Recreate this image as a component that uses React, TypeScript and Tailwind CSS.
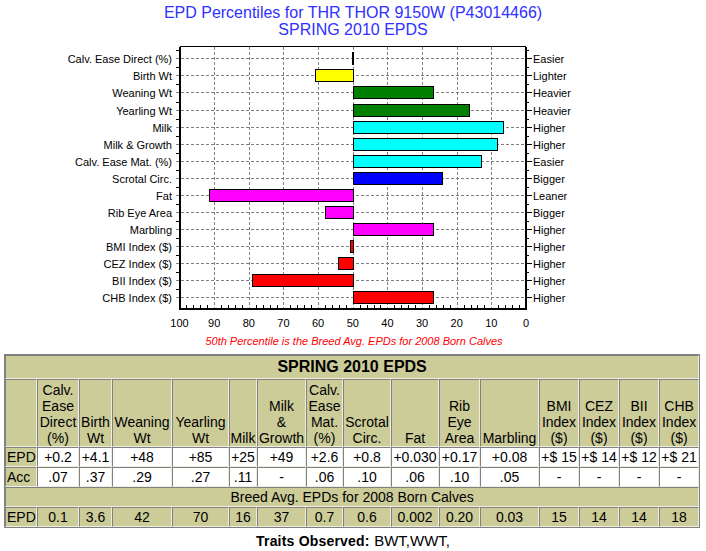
const FONT = '"Liberation Sans", Arial, sans-serif'

interface Trait {
  label: string
  side: string
  from: number
  to: number
  color: string
}

const TRAITS: Trait[] = [
  { label: 'Calv. Ease Direct (%)', side: 'Easier', from: 351.5, to: 352.5, color: '#000000' },
  { label: 'Birth Wt', side: 'Lighter', from: 315, to: 352.5, color: '#ffff00' },
  { label: 'Weaning Wt', side: 'Heavier', from: 352.5, to: 432, color: '#008000' },
  { label: 'Yearling Wt', side: 'Heavier', from: 352.5, to: 468.5, color: '#008000' },
  { label: 'Milk', side: 'Higher', from: 352.5, to: 502, color: '#00ffff' },
  { label: 'Milk & Growth', side: 'Higher', from: 352.5, to: 496.5, color: '#00ffff' },
  { label: 'Calv. Ease Mat. (%)', side: 'Easier', from: 352.5, to: 480.5, color: '#00ffff' },
  { label: 'Scrotal Circ.', side: 'Bigger', from: 352.5, to: 441, color: '#0000ff' },
  { label: 'Fat', side: 'Leaner', from: 209, to: 352.5, color: '#ff00ff' },
  { label: 'Rib Eye Area', side: 'Bigger', from: 325, to: 352.5, color: '#ff00ff' },
  { label: 'Marbling', side: 'Higher', from: 352.5, to: 432, color: '#ff00ff' },
  { label: 'BMI Index ($)', side: 'Higher', from: 350, to: 352.5, color: '#ff0000' },
  { label: 'CEZ Index ($)', side: 'Higher', from: 338, to: 352.5, color: '#ff0000' },
  { label: 'BII Index ($)', side: 'Higher', from: 252, to: 352.5, color: '#ff0000' },
  { label: 'CHB Index ($)', side: 'Higher', from: 352.5, to: 432, color: '#ff0000' },
]

// plot box in page pixels
const LEFT = 179.5
const RIGHT = 526
const TOP = 46.5
const BOTTOM = 308.5
const rowY = (i: number) => Math.round(58.3 + i * 17.07)
const xOf = (v: number) => RIGHT - v * 3.465

function PercentileChart() {
  const ticks = [100, 90, 80, 70, 60, 50, 40, 30, 20, 10, 0]
  const minor: number[] = []
  for (let v = 2; v < 100; v += 2) if (v % 10) minor.push(v)

  return (
    <svg
      width={706}
      height={296}
      viewBox="0 38 706 296"
      className="block"
      shapeRendering="crispEdges"
      fontFamily={FONT}
      fontSize={11}
    >
      {/* vertical grid */}
      {ticks.slice(1, -1).map((v) => (
        <line
          key={v}
          x1={Math.round(xOf(v)) + 0.5}
          x2={Math.round(xOf(v)) + 0.5}
          y1={TOP}
          y2={BOTTOM}
          stroke="#808080"
          strokeDasharray="3 2"
        />
      ))}
      {/* row grid + left ticks */}
      {TRAITS.map((t, i) => (
        <line
          key={t.label}
          x1={176}
          x2={RIGHT}
          y1={rowY(i) + 0.5}
          y2={rowY(i) + 0.5}
          stroke="#808080"
          strokeDasharray="3 2"
        />
      ))}
      {/* bars */}
      {TRAITS.map((t, i) => (
        <rect
          key={t.label}
          x={Math.round(t.from) + 0.5}
          y={rowY(i) - 5.5}
          width={Math.max(1, Math.round(t.to - t.from))}
          height={12}
          fill={t.color}
          stroke="#000"
        />
      ))}
      {/* frame */}
      <line x1={LEFT} x2={RIGHT} y1={TOP} y2={TOP} stroke="#000" />
      <line x1={LEFT} x2={LEFT} y1={TOP} y2={BOTTOM + 1} stroke="#000" strokeWidth={2} />
      <line x1={RIGHT} x2={RIGHT} y1={TOP} y2={BOTTOM + 1} stroke="#000" strokeWidth={2} />
      <line x1={LEFT - 1} x2={RIGHT + 1} y1={BOTTOM} y2={BOTTOM} stroke="#000" strokeWidth={2} />
      {/* axis ticks */}
      {minor.map((v) => (
        <line
          key={v}
          x1={Math.round(xOf(v)) + 0.5}
          x2={Math.round(xOf(v)) + 0.5}
          y1={BOTTOM - 4}
          y2={BOTTOM}
          stroke="#000"
        />
      ))}
      {TRAITS.map((t, i) => (
        <g key={t.label}>
          <line x1={RIGHT} x2={532} y1={rowY(i) + 0.5} y2={rowY(i) + 0.5} stroke="#000" />
          <line x1={RIGHT} x2={529} y1={rowY(i) - 8 + 0.5} y2={rowY(i) - 8 + 0.5} stroke="#000" />
          <line x1={176} x2={LEFT} y1={rowY(i) - 8 + 0.5} y2={rowY(i) - 8 + 0.5} stroke="#000" />
        </g>
      ))}
      {/* labels */}
      {TRAITS.map((t, i) => (
        <g key={t.label}>
          <text x={172} y={rowY(i) + 4.5} textAnchor="end" fill="#000">
            {t.label}
          </text>
          <text x={533} y={rowY(i) + 4.5} fill="#000">
            {t.side}
          </text>
        </g>
      ))}
      {ticks.map((v) => (
        <text key={v} x={xOf(v)} y={327} textAnchor="middle" fill="#000">
          {v}
        </text>
      ))}
    </svg>
  )
}

const COLS = [
  'w-[32px]', 'w-[42px]', 'w-[33px]', 'w-[60px]', 'w-[57px]', 'w-[28px]', 'w-[49px]', 'w-[37px]',
  'w-[48px]', 'w-[48px]', 'w-[41px]', 'w-[59px]', 'w-[40px]', 'w-[40px]', 'w-[40px]', 'w-[40px]',
]

const HEADERS: string[][] = [
  [],
  ['Calv.', 'Ease', 'Direct', '(%)'],
  ['Birth', 'Wt'],
  ['Weaning', 'Wt'],
  ['Yearling', 'Wt'],
  ['Milk'],
  ['Milk', '&', 'Growth'],
  ['Calv.', 'Ease', 'Mat.', '(%)'],
  ['Scrotal', 'Circ.'],
  ['Fat'],
  ['Rib', 'Eye', 'Area'],
  ['Marbling'],
  ['BMI', 'Index', '($)'],
  ['CEZ', 'Index', '($)'],
  ['BII', 'Index', '($)'],
  ['CHB', 'Index', '($)'],
]

const EPD = ['+0.2', '+4.1', '+48', '+85', '+25', '+49', '+2.6', '+0.8', '+0.030', '+0.17', '+0.08', '+$ 15', '+$ 14', '+$ 12', '+$ 21']
const ACC = ['.07', '.37', '.29', '.27', '.11', '-', '.06', '.10', '.06', '.10', '.05', '-', '-', '-', '-']
const BREED = ['0.1', '3.6', '42', '70', '16', '37', '0.7', '0.6', '0.002', '0.20', '0.03', '15', '14', '14', '18']

const cell = 'border-t border-l border-b border-r border-t-[#808080] border-l-[#808080] border-b-[#eeeee0] border-r-[#eeeee0] p-0'

function EpdTable() {
  return (
    <table
      className="ml-[4px] w-[696px] table-fixed border-separate border-spacing-0 border border-[#808080] bg-[#cccc99] text-[14px] leading-4 text-black"
      style={{ fontFamily: FONT }}
    >
      <colgroup>
        {COLS.map((c, i) => (
          <col key={i} className={c} />
        ))}
      </colgroup>
      <tbody>
        <tr>
          <td colSpan={16} className={`${cell} h-[24px] text-center text-[16px] font-bold`}>
            SPRING 2010 EPDS
          </td>
        </tr>
        <tr>
          {HEADERS.map((lines, i) => (
            <td key={i} className={`${cell} h-[68px] whitespace-nowrap text-center align-bottom`}>
              {lines.map((l, j) => (
                <div key={j}>{l}</div>
              ))}
            </td>
          ))}
        </tr>
        <tr>
          <td className={`${cell} h-[20px] pl-[1px] text-left`}>EPD</td>
          {EPD.map((v, i) => (
            <td key={i} className={`${cell} whitespace-nowrap bg-white text-center`}>
              {v}
            </td>
          ))}
        </tr>
        <tr>
          <td className={`${cell} h-[20px] pl-[1px] text-left`}>Acc</td>
          {ACC.map((v, i) => (
            <td key={i} className={`${cell} bg-white text-center`}>
              {v}
            </td>
          ))}
        </tr>
        <tr>
          <td colSpan={16} className={`${cell} h-[20px] text-center`}>
            Breed Avg. EPDs for 2008 Born Calves
          </td>
        </tr>
        <tr>
          <td className={`${cell} h-[20px] pl-[1px] text-left`}>EPD</td>
          {BREED.map((v, i) => (
            <td key={i} className={`${cell} text-center`}>
              {v}
            </td>
          ))}
        </tr>
      </tbody>
    </table>
  )
}

export default function App() {
  return (
    <div className="w-[706px] min-h-[551px] bg-white" style={{ fontFamily: FONT }}>
      <div className="pt-[4px] text-center text-[16px] leading-[17px] text-[#3030ff]">
        <div>EPD Percentiles for THR THOR 9150W (P43014466)</div>
        <div>SPRING 2010 EPDS</div>
      </div>
      <PercentileChart />
      <p className="pl-[2px] text-center text-[11px] leading-[14px] italic text-[#ff0000]">
        50th Percentile is the Breed Avg. EPDs for 2008 Born Calves
      </p>
      <div className="mt-[6px]">
        <EpdTable />
      </div>
      <p className="mt-[3px] text-center leading-5 text-black">
        <span className="text-[14px] font-bold tracking-[0.2px]">Traits Observed:</span>{' '}
        <span className="text-[15px]">BWT,WWT,</span>
      </p>
    </div>
  )
}
